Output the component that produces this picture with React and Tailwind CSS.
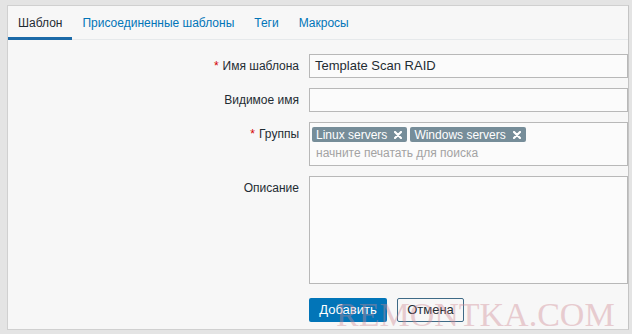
export default function App() {
  const font = { fontFamily: '"Liberation Sans", Arial, sans-serif' };
  const tabs = ["Шаблон", "Присоединенные шаблоны", "Теги", "Макросы"];
  return (
    <div
      className="relative w-[632px] h-[334px] overflow-hidden bg-[#e4e4e4] pt-[5px] pl-[7px] pr-[3px] pb-[4px] text-[12px] text-[#1f2c33]"
      style={font}
    >
      <div className="h-full bg-[#f7f7f7] border border-[#d0d0d0] border-r-[#c4c4c4]">
        <div className="flex border-b border-[#e6e9eb] h-[34px]">
          {tabs.map((t, i) => (
            <div
              key={t}
              className={
                i === 0
                  ? "px-[10px] h-[34px] flex items-center border-b-[3px] border-[#1c6aa8] text-[#1f2c33] pt-[3px]"
                  : "px-[10px] h-[34px] flex items-center text-[#0275b8] border-b-[3px] border-transparent pt-[3px]"
              }
            >
              {t}
            </div>
          ))}
        </div>
        <div className="pt-[14px] flex flex-col gap-[10px]">
          <Row label="Имя шаблона" req>
            <div className="h-[24px] border border-[#b8b8b8] bg-[#fbfbfb] flex items-center px-[5px] text-[13px]">
              Template Scan RAID
            </div>
          </Row>
          <Row label="Видимое имя">
            <div className="h-[24px] border border-[#b8b8b8] bg-[#fbfbfb]" />
          </Row>
          <Row label="Группы" req>
            <div className="h-[44px] border border-[#b8b8b8] bg-[#fbfbfb] px-[2px] pt-[4px]">
              <div className="flex gap-[3px]">
                <Tag text="Linux servers" />
                <Tag text="Windows servers" />
              </div>
              <div className="text-[#a3a3a3] pl-[4px] mt-[3px] leading-[16px]">
                начните печатать для поиска
              </div>
            </div>
          </Row>
          <Row label="Описание">
            <div className="h-[108px] border border-[#b8b8b8] bg-[#fbfbfb]" />
          </Row>
          <div className="flex gap-[10px] pl-[301px] mt-[4px]">
            <div className="w-[78px] h-[24px] bg-[#0275b8] text-white rounded-[2px] flex items-center justify-center text-[13px]">
              Добавить
            </div>
            <div className="w-[67px] h-[24px] border border-[#3e6a86] text-[#1f2c33] rounded-[2px] flex items-center justify-center text-[13px]">
              Отмена
            </div>
          </div>
        </div>
      </div>
      <div
        className="absolute left-[336px] top-[298px] text-[34px] leading-none text-[#d08a94] opacity-40 pointer-events-none"
        style={{ fontFamily: '"Liberation Serif", "Times New Roman", serif' }}
      >
        REMONTKA.COM
      </div>
    </div>
  );
}

function Row({ label, req, children }) {
  return (
    <div className="flex items-start">
      <div className="w-[291px] text-right leading-[24px] shrink-0">
        {req && <span className="text-[#d40000] mr-[4px]">*</span>}
        {label}
      </div>
      <div className="ml-[10px] flex-1">{children}</div>
    </div>
  );
}

function Tag({ text }) {
  return (
    <div className="h-[15px] bg-[#768d99] text-white rounded-[2px] flex items-center pl-[4px] pr-[5px] text-[12px] leading-none">
      <span>{text}</span>
      <svg width="8" height="8" viewBox="0 0 8 8" className="ml-[7px]">
        <path d="M1 1L7 7M7 1L1 7" stroke="white" strokeWidth="2.2" strokeLinecap="round" />
      </svg>
    </div>
  );
}
